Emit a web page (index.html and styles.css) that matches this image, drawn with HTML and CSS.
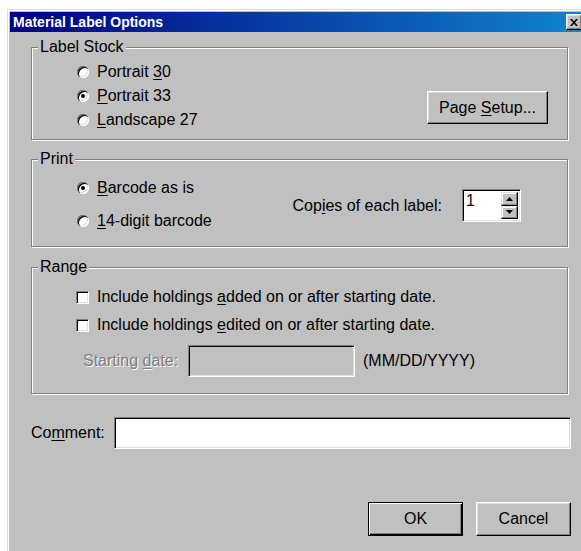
FILE: index.html
```html
<!DOCTYPE html>
<html>
<head>
<meta charset="utf-8">
<title>Material Label Options</title>
<link rel="stylesheet" href="styles.css">
</head>
<body>
<div class="window">
  <div class="frame">
    <div class="titlebar">
      <span class="title">Material Label Options</span>
      <span class="close">
        <svg width="8" height="7" viewBox="0 0 8 7"><path d="M0 0h2l2 2.5L6 0h2L5 3.5 8 7H6L4 4.5 2 7H0l3-3.5z" fill="#000"/></svg>
      </span>
    </div>

    <div class="content">
      <div class="group stock">
        <span class="legend">Label Stock</span>
        <div class="options">
          <label class="row"><span class="radio"></span><span>Portrait <u>3</u>0</span></label>
          <label class="row"><span class="radio on"></span><span><u>P</u>ortrait 33</span></label>
          <label class="row"><span class="radio"></span><span><u>L</u>andscape 27</span></label>
        </div>
        <button class="btn setup">Page <u>S</u>etup...</button>
      </div>

      <div class="group print">
        <span class="legend">Print</span>
        <div class="options spaced">
          <label class="row"><span class="radio on"></span><span><u>B</u>arcode as is</span></label>
          <label class="row"><span class="radio"></span><span><u>1</u>4-digit barcode</span></label>
        </div>
        <div class="copies">
          <span>Cop<u>i</u>es of each label:</span>
          <div class="spin">
            <span class="spin-value">1</span>
            <div class="spin-buttons">
              <span class="spin-btn"><svg width="7" height="4" viewBox="0 0 7 4"><path d="M3.5 0L7 4H0z" fill="#000"/></svg></span>
              <span class="spin-btn"><svg width="7" height="4" viewBox="0 0 7 4"><path d="M0 0h7L3.5 4z" fill="#000"/></svg></span>
            </div>
          </div>
        </div>
      </div>

      <div class="group range">
        <span class="legend">Range</span>
        <label class="row check-row"><span class="check"></span><span>Include holdings <u>a</u>dded on or after starting date.</span></label>
        <label class="row check-row second"><span class="check"></span><span>Include holdings <u>e</u>dited on or after starting date.</span></label>
        <div class="date-row">
          <span class="disabled-label">Starting <u>d</u>ate:</span>
          <span class="field date-field"></span>
          <span class="hint">(MM/DD/YYYY)</span>
        </div>
      </div>

      <div class="comment-row">
        <span class="comment-label">Co<u>m</u>ment:</span>
        <span class="field comment-field"></span>
      </div>

      <div class="actions">
        <button class="btn default">OK</button>
        <button class="btn">Cancel</button>
      </div>
    </div>
  </div>
</div>
</body>
</html>
```

FILE: styles.css
```css
html, body {
  margin: 0;
  padding: 0;
  background: #fff;
  overflow: hidden;
  height: 551px;
}

body {
  font-family: "Liberation Sans", Arial, sans-serif;
  font-size: 16px;
  color: #000;
}

u {
  text-decoration: underline;
  text-underline-offset: 2px;
}

/* window frame */
.window {
  margin: 9px 0 0 7px;
  width: 580px;
  height: 560px;
  border-top: 1px solid #dcdcdc;
  border-left: 1px solid #dcdcdc;
  background: #c0c0c0;
}

.frame {
  height: 100%;
  border-top: 1px solid #fff;
  border-left: 1px solid #fff;
  padding: 1px 0 0 1px;
  box-sizing: border-box;
}

/* caption */
.titlebar {
  width: 574px;
  height: 20px;
  display: flex;
  align-items: center;
  background: linear-gradient(to right, #000080, #1084d0);
  box-sizing: border-box;
  padding: 0 2px 0 3px;
}

.title {
  color: #fff;
  font-weight: bold;
  font-size: 14px;
}

.close {
  margin-left: auto;
  width: 16px;
  height: 16px;
  box-sizing: border-box;
  background: #c0c0c0;
  border: 1px solid;
  border-color: #fff #000 #000 #fff;
  box-shadow: inset -1px -1px 0 #808080, inset 1px 1px 0 #dfdfdf;
  display: flex;
  align-items: center;
  justify-content: center;
}

/* dialog body */
.content {
  padding: 15px 13px 0 21px;
}

.group {
  position: relative;
  width: 537px;
  box-sizing: border-box;
  border: 1px solid #808080;
  box-shadow: inset 1px 1px 0 #fff, 1px 1px 0 #fff;
}

.legend {
  position: absolute;
  top: -10px;
  left: 6px;
  padding: 0 2px;
  background: #c0c0c0;
  line-height: 18px;
}

.stock {
  height: 93px;
  display: flex;
  justify-content: space-between;
  align-items: flex-start;
  padding: 12px 19px 0 45px;
}

.print {
  margin-top: 19px;
  height: 88px;
  display: flex;
  align-items: flex-start;
  padding: 16px 46px 0 45px;
}

.range {
  margin-top: 20px;
  height: 127px;
  padding: 17px 0 0 44px;
}

.options {
  display: flex;
  flex-direction: column;
}

.options.spaced {
  gap: 9px;
}

.row {
  display: flex;
  align-items: center;
  height: 24px;
  white-space: nowrap;
}

/* radio button */
.radio {
  position: relative;
  width: 12px;
  height: 12px;
  border-radius: 50%;
  background: #fff;
  margin-right: 8px;
  flex: none;
  box-shadow:
    inset 1px 1px 0 #808080,
    inset 2px 2px 0 #000,
    inset -1px -1px 0 #fff,
    inset -2px -2px 0 #dfdfdf;
}

.radio.on::after {
  content: "";
  position: absolute;
  left: 4px;
  top: 4px;
  width: 4px;
  height: 4px;
  border-radius: 50%;
  background: #000;
}

/* check box */
.check {
  width: 13px;
  height: 13px;
  box-sizing: border-box;
  background: #fff;
  border: 1px solid;
  border-color: #808080 #fff #fff #808080;
  box-shadow: inset 1px 1px 0 #000, inset -1px -1px 0 #dfdfdf;
  margin-right: 8px;
  flex: none;
}

.check-row.second {
  margin-top: 4px;
}

/* buttons */
.btn {
  font-family: inherit;
  font-size: 16px;
  color: #000;
  background: #c0c0c0;
  border: 1px solid;
  border-color: #fff #000 #000 #fff;
  box-shadow: inset -1px -1px 0 #808080, inset 1px 1px 0 #dfdfdf;
  padding: 0;
  box-sizing: border-box;
}

.setup {
  width: 121px;
  height: 33px;
  margin-top: 31px;
}

.btn.default {
  border-color: #000;
  box-shadow: inset 1px 1px 0 #fff, inset -1px -1px 0 #000, inset -2px -2px 0 #808080;
}

/* sunken fields */
.field {
  display: block;
  box-sizing: border-box;
  border: 1px solid;
  border-color: #808080 #fff #fff #808080;
  box-shadow: inset 1px 1px 0 #000, inset -1px -1px 0 #dfdfdf;
}

/* copies spinner */
.copies {
  display: flex;
  align-items: center;
  gap: 20px;
  margin-left: auto;
  margin-top: 13px;
}

.spin {
  display: flex;
  width: 59px;
  height: 33px;
  box-sizing: border-box;
  background: #fff;
  border: 1px solid;
  border-color: #808080 #fff #fff #808080;
  box-shadow: inset 1px 1px 0 #000, inset -1px -1px 0 #dfdfdf;
  padding: 2px 2px 2px 3px;
}

.spin-value {
  flex: 1;
  line-height: 16px;
  padding-top: 1px;
}

.spin-buttons {
  display: flex;
  flex-direction: column;
  width: 17px;
}

.spin-btn {
  flex: 1;
  box-sizing: border-box;
  background: #c0c0c0;
  border: 1px solid;
  border-color: #dfdfdf #000 #000 #dfdfdf;
  box-shadow: inset -1px -1px 0 #808080, inset 1px 1px 0 #fff;
  display: flex;
  align-items: center;
  justify-content: center;
}

/* starting date */
.date-row {
  display: flex;
  align-items: center;
  margin-top: 8px;
}

.disabled-label {
  width: 105px;
  margin-left: 7px;
  color: #808080;
  text-shadow: 1px 1px 0 #fff;
}

.date-field {
  width: 167px;
  height: 32px;
  background: #c0c0c0;
}

.hint {
  margin-left: 8px;
}

/* comment */
.comment-row {
  display: flex;
  align-items: center;
  margin-top: 23px;
}

.comment-label {
  width: 83px;
}

.comment-field {
  width: 457px;
  height: 32px;
  background: #fff;
}

/* dialog buttons */
.actions {
  display: flex;
  justify-content: flex-end;
  gap: 13px;
  margin-top: 53px;
  width: 540px;
}

.actions .btn {
  width: 95px;
  height: 34px;
}
```
